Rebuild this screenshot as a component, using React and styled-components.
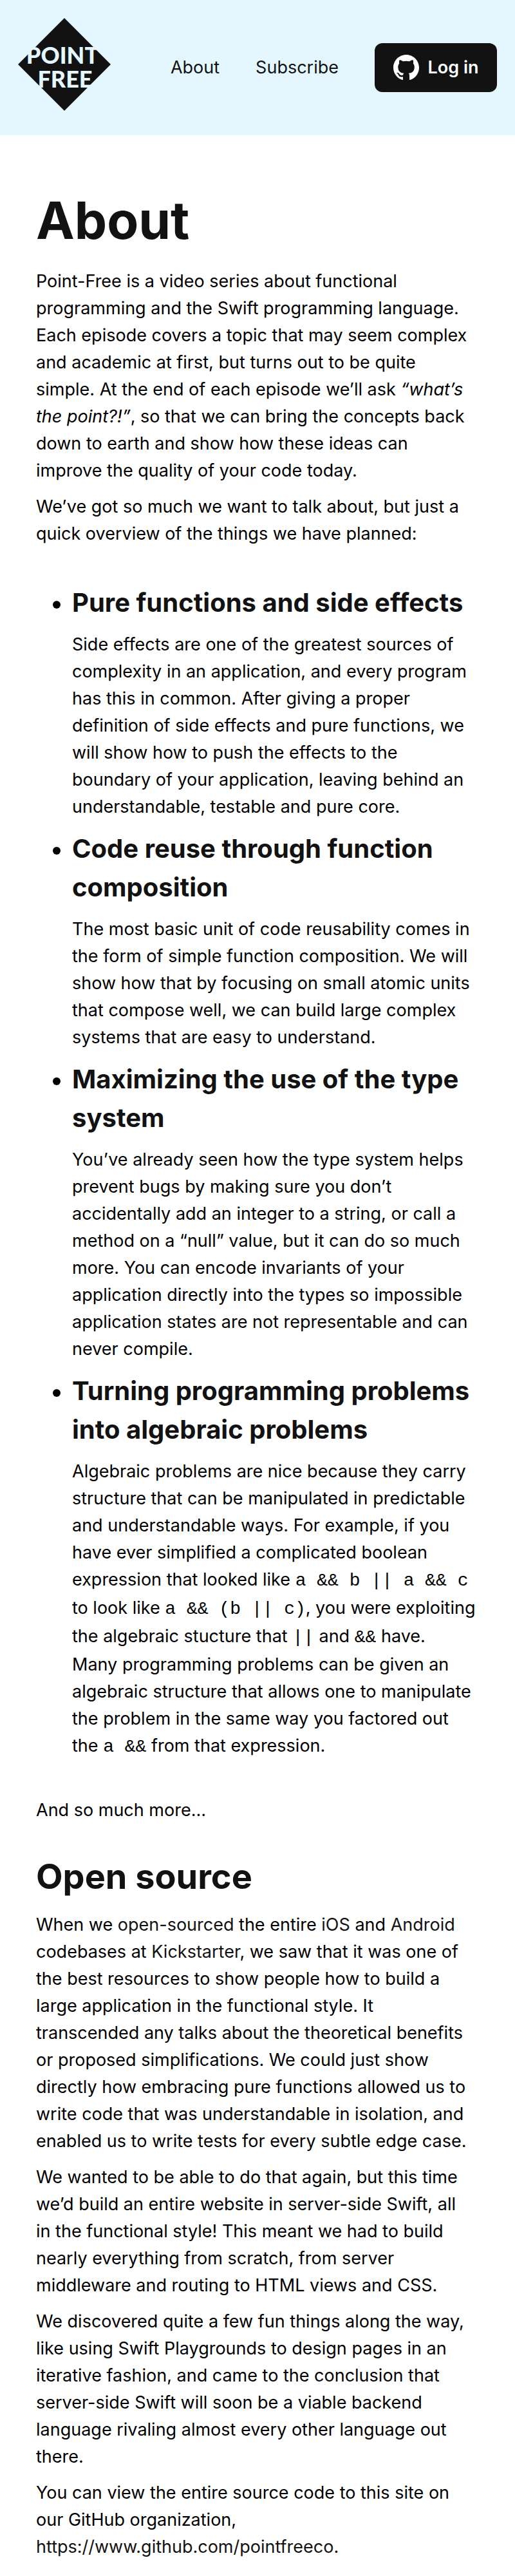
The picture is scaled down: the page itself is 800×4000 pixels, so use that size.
import React from "react";
import styled, { createGlobalStyle } from "styled-components";

const ink = "#121212";
const sky = "#e4f7ff";

const GlobalStyle = createGlobalStyle`
  body {
    margin: 0;
    background: #fff;
    color: #000;
    font-family: Inter, "Liberation Sans", sans-serif;
    font-size: 27px;
    line-height: 42px;
  }
`;

const Header = styled.header`
  display: flex;
  justify-content: space-between;
  align-items: flex-start;
  padding: 28px;
  background: ${sky};
`;

const LogoLink = styled.a`
  display: block;
  svg {
    display: block;
  }
`;

const LogoText = styled.text`
  font-family: Lato, sans-serif;
  font-weight: 900;
  font-size: 36px;
  fill: ${sky};
  text-anchor: middle;
`;

const Nav = styled.nav`
  display: flex;
  align-items: center;
  gap: 56px;
  min-height: 154px;
`;

const NavLink = styled.a`
  color: ${ink};
  text-decoration: none;
`;

const LoginButton = styled.button`
  display: flex;
  align-items: center;
  justify-content: center;
  gap: 14px;
  min-width: 190px;
  min-height: 76px;
  padding: 14px 28px;
  border: 0;
  border-radius: 12px;
  background: ${ink};
  color: #fff;
  font: inherit;
  font-weight: 600;
`;

const Article = styled.main`
  padding: 72px 56px 28px;
`;

const Title = styled.h1`
  margin: 0 0 14px;
  color: ${ink};
  font-size: 80px;
  line-height: 120px;
`;

const SectionTitle = styled.h2`
  margin: 42px 0 14px;
  color: ${ink};
  font-size: 54px;
  line-height: 80px;
`;

const TopicTitle = styled.h4`
  margin: 0 0 14px;
  color: ${ink};
  font-size: 40px;
  line-height: 60px;
`;

const Paragraph = styled.p`
  margin: 0 0 14px;
  font-size: 27px;
`;

const TopicList = styled.ul`
  margin: 56px 0;
  padding-left: 56px;
`;

const TopicItem = styled.li`
  font-size: 36px;
`;

const Code = styled.code`
  font-family: "Liberation Mono", monospace;
  font-size: 28px;
`;

const TextLink = styled.a`
  color: ${ink};
  text-decoration: none;
`;

function Logo() {
  return (
    <svg width="144" height="144" viewBox="0 0 144 144" role="img" aria-label="Point-Free">
      <path d="M72 0 144 72 72 144 0 72Z" fill={ink} />
      <LogoText x="69" y="71">POINT</LogoText>
      <LogoText x="73" y="108">FREE</LogoText>
    </svg>
  );
}

function GitHubMark() {
  return (
    <svg width="40" height="40" viewBox="0 0 16 16" fill="#fff" aria-hidden="true">
      <path d="M8 0C3.58 0 0 3.58 0 8c0 3.54 2.29 6.53 5.47 7.59.4.07.55-.17.55-.38 0-.19-.01-.82-.01-1.49-2.01.37-2.53-.49-2.69-.94-.09-.23-.48-.94-.82-1.13-.28-.15-.68-.52-.01-.53.63-.01 1.08.58 1.23.82.72 1.21 1.87.87 2.33.66.07-.52.28-.87.51-1.07-1.78-.2-3.64-.89-3.64-3.95 0-.87.31-1.59.82-2.15-.08-.2-.36-1.02.08-2.12 0 0 .67-.21 2.2.82.64-.18 1.32-.27 2-.27s1.36.09 2 .27c1.53-1.04 2.2-.82 2.2-.82.44 1.1.16 1.92.08 2.12.51.56.82 1.27.82 2.15 0 3.07-1.87 3.75-3.65 3.95.29.25.54.73.54 1.48 0 1.07-.01 1.93-.01 2.2 0 .21.15.46.55.38A8.01 8.01 0 0 0 16 8c0-4.42-3.58-8-8-8Z" />
    </svg>
  );
}

function Topic({ title, children }) {
  return (
    <TopicItem>
      <TopicTitle>{title}</TopicTitle>
      <Paragraph>{children}</Paragraph>
    </TopicItem>
  );
}

export default function App() {
  return (
    <>
      <GlobalStyle />
      <Header>
        <LogoLink href="#">
          <Logo />
        </LogoLink>
        <Nav>
          <NavLink href="#about">About</NavLink>
          <NavLink href="#subscribe">Subscribe</NavLink>
          <LoginButton type="button">
            <GitHubMark />
            Log in
          </LoginButton>
        </Nav>
      </Header>
      <Article>
        <Title>About</Title>
        <Paragraph>
          Point-Free is a video series about functional programming and the Swift programming
          language. Each episode covers a topic that may seem complex and academic at first, but
          turns out to be quite simple. At the end of each episode we’ll ask{" "}
          <em>“what’s the point?!”</em>, so that we can bring the concepts back down to earth and
          show how these ideas can <br />
          improve the quality of your code today.
        </Paragraph>
        <Paragraph>
          We’ve got so much we want to talk about, but just a quick overview of the things we have
          planned:
        </Paragraph>
        <TopicList>
          <Topic title="Pure functions and side effects">
            Side effects are one of the greatest sources of complexity in an application, and every
            program has this in common. After giving a proper definition of side effects and pure
            functions, we will show how to push the effects to the boundary of your application,
            leaving behind an understandable, testable and pure core.
          </Topic>
          <Topic title="Code reuse through function composition">
            The most basic unit of code reusability comes in the form of simple function
            composition. We will show how that by focusing on small atomic units that compose well,
            we can build large complex systems that are easy to understand.
          </Topic>
          <Topic title="Maximizing the use of the type system">
            You’ve already seen how the type system helps prevent bugs by making sure you don’t
            accidentally add an integer to a string, or call a method on a “null” value, but it can
            do so much more. You can encode invariants of your application directly into the types
            so impossible application states are not representable and can never compile.
          </Topic>
          <Topic title="Turning programming problems into algebraic problems">
            Algebraic problems are nice because they carry structure that can be manipulated in
            predictable and understandable ways. For example, if you have ever simplified a
            complicated boolean expression that looked like <Code>a && b || a && c</Code> to look
            like <Code>a && (b || c)</Code>, you were exploiting the algebraic stucture that{" "}
            <Code>||</Code> and <Code>&&</Code> have. <br />
            Many programming problems can be given an algebraic structure that allows one to
            manipulate the problem in the same way you factored out the <Code>a &&</Code> from that
            expression.
          </Topic>
        </TopicList>
        <Paragraph>And so much more…</Paragraph>
        <SectionTitle>Open source</SectionTitle>
        <Paragraph>
          When we <TextLink href="#open-sourced">open-sourced</TextLink> the entire{" "}
          <TextLink href="#ios">iOS</TextLink> and <TextLink href="#android">Android</TextLink>{" "}
          codebases at <TextLink href="#kickstarter">Kickstarter</TextLink>, we saw that it was one
          of the best resources to show people how to build a large application in the functional
          style. It transcended any talks about the theoretical benefits or proposed
          simplifications. We could just show directly how embracing pure functions allowed us to
          write code that was understandable in isolation, and enabled us to write tests for every
          subtle edge case.
        </Paragraph>
        <Paragraph>
          We wanted to be able to do that again, but this time we’d build an entire website in
          server-side Swift, all <br />
          in the functional style! This meant we had to build nearly everything from scratch, from
          server middleware and routing to HTML views and CSS.
        </Paragraph>
        <Paragraph>
          We discovered quite a few fun things along the way, like using Swift Playgrounds to design
          pages in an iterative fashion, and came to the conclusion that server-side Swift will soon
          be a viable backend language rivaling almost every other language out there.
        </Paragraph>
        <Paragraph>
          You can view the entire source code to this site on our GitHub organization,{" "}
          <TextLink href="https://www.github.com/pointfreeco">
            https://www.github.com/pointfreeco
          </TextLink>
          .
        </Paragraph>
      </Article>
    </>
  );
}
